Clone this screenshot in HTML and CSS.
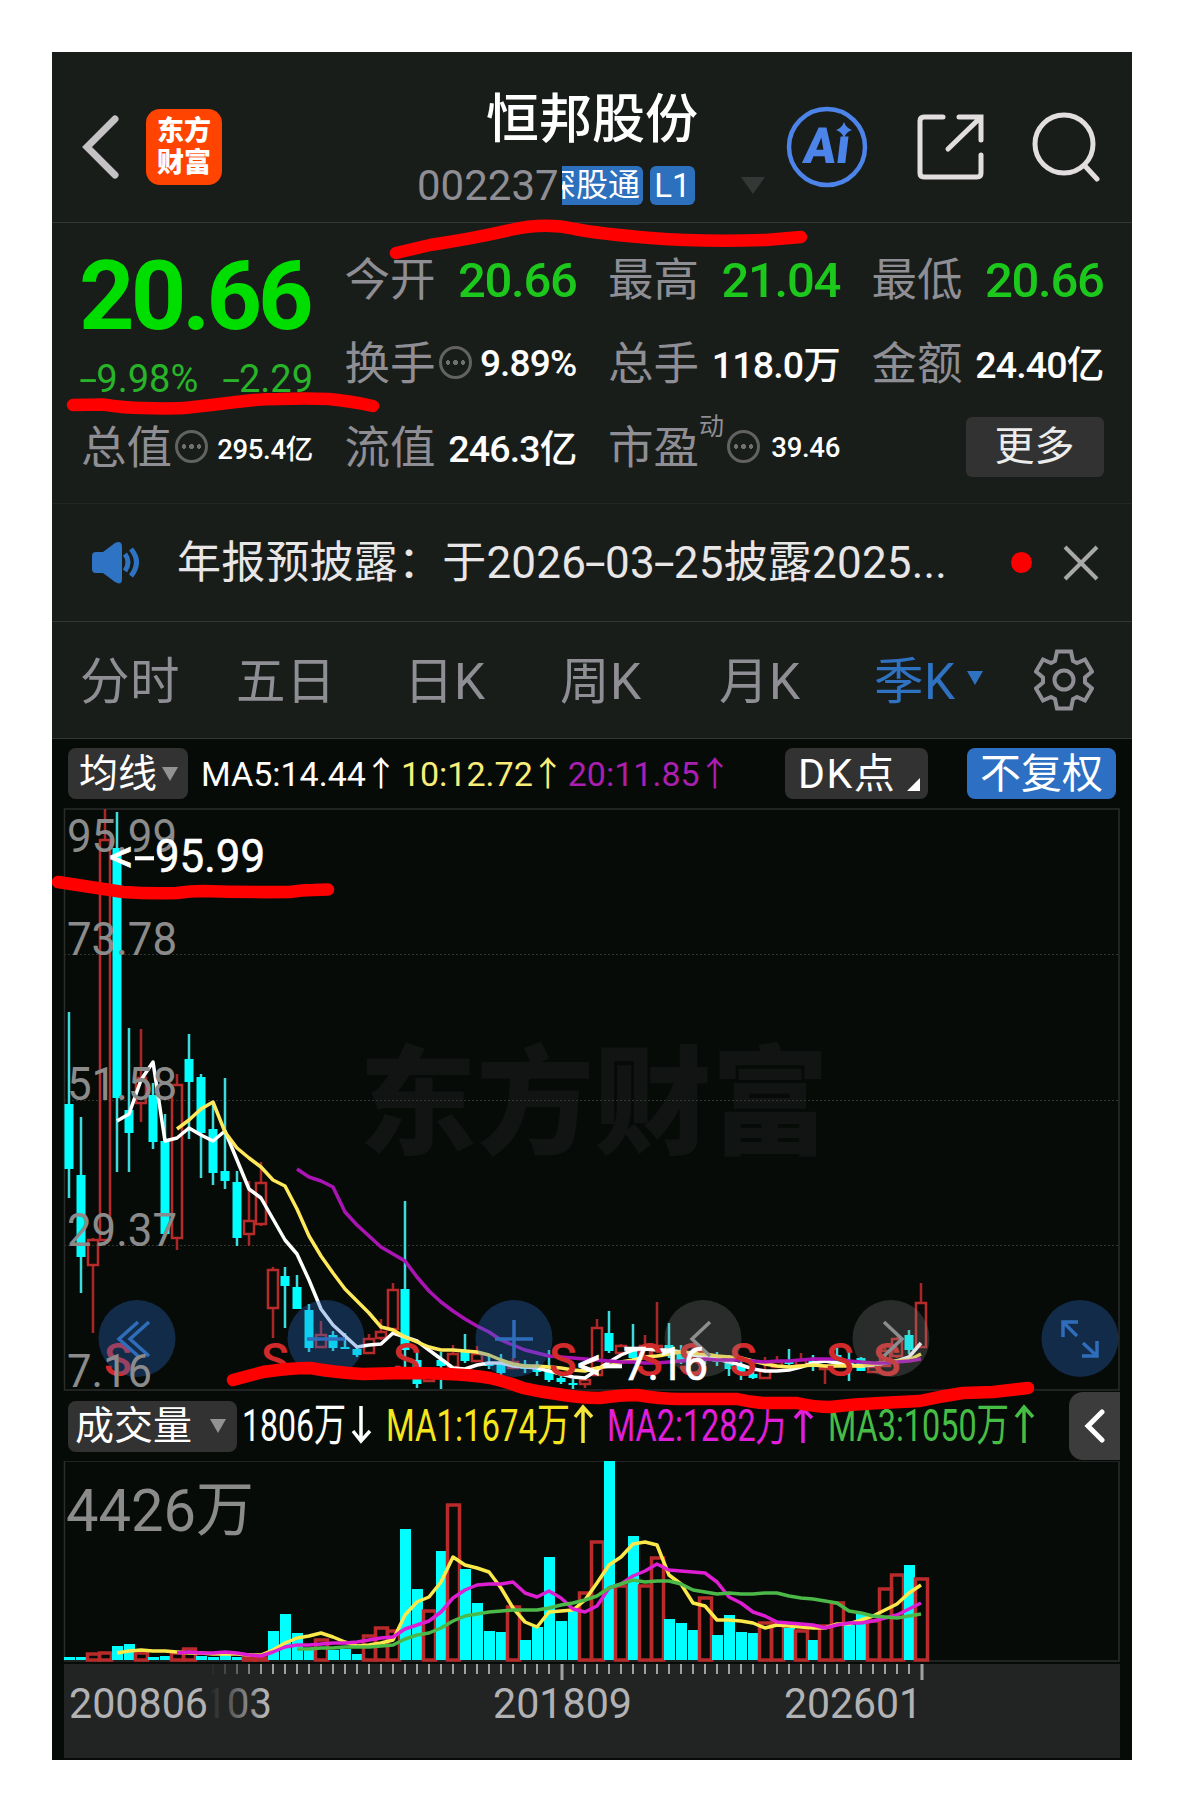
FILE: index.html
```html
<!DOCTYPE html>
<html lang="zh-CN">
<head>
    <meta charset="UTF-8">
    <meta name="viewport" content="width=device-width, initial-scale=1.0">
    <title>恒邦股份 002237</title>
    <link rel="stylesheet" href="styles.css">
</head>
<body>
    <div class="phone">
        <header class="header">
            <div class="header-left">
                <svg class="back" width="38" height="64" viewBox="0 0 38 64"><path d="M33 4 L5 32 L33 60"/></svg>
                <div class="logo"><span>东方</span><span>财富</span></div>
            </div>
            <div class="header-title">
                <h1>恒邦股份</h1>
                <div class="code-row">
                    <span class="code">002237</span>
                    <span class="badge badge-cut"><span>深股通</span></span>
                    <span class="badge badge-l1">L1</span>
                    <i class="tri tri-title"></i>
                </div>
            </div>
            <div class="header-right">
                <svg width="82" height="82" viewBox="0 0 82 82">
                    <circle cx="41" cy="41" r="38" fill="none" stroke="#4c84ea" stroke-width="4.5"/>
                    <text class="ai" transform="translate(16 57) skewX(-7)" textLength="46" lengthAdjust="spacingAndGlyphs">Aı</text>
                    <path d="M58 16 Q60 22 66 24 Q60 26 58 32 Q56 26 50 24 Q56 22 58 16Z" fill="#4c84ea"/>
                </svg>
                <svg class="line-icon" width="68" height="68" viewBox="0 0 68 68">
                    <path d="M27 4 H8 Q4 4 4 8 V60 Q4 64 8 64 H61 Q65 64 65 60 V42"/>
                    <path d="M32 36 L64 5 M43 4 H65 V27"/>
                </svg>
                <svg class="line-icon" width="70" height="70" viewBox="0 0 70 70">
                    <circle cx="32" cy="32" r="29"/>
                    <path d="M53 54 L65 67"/>
                </svg>
            </div>
        </header>

        <section class="quote">
            <div class="price-box">
                <div class="price">20.66</div>
                <div class="change"><span><i class="dash">-</i>9.98%</span><span><i class="dash">-</i>2.29</span></div>
            </div>
            <div class="item"><label>今开</label><b class="lg green">20.66</b></div>
            <div class="item"><label>最高</label><b class="lg green">21.04</b></div>
            <div class="item"><label>最低</label><b class="lg green">20.66</b></div>
            <div class="item"><label>换手</label><i class="dots"></i><b class="pct">9.89%</b></div>
            <div class="item"><label>总手</label><b>118.0万</b></div>
            <div class="item"><label>金额</label><b>24.40亿</b></div>
            <div class="item"><label>总值</label><i class="dots"></i><b class="sm">295.4亿</b></div>
            <div class="item"><label>流值</label><b>246.3亿</b></div>
            <div class="item"><label>市盈</label><sup>动</sup><i class="dots"></i><b class="sm">39.46</b></div>
            <div class="item item-more"><button class="more">更多</button></div>
        </section>

        <section class="notice">
            <svg width="52" height="44" viewBox="0 0 52 44">
                <path d="M2 15 Q2 11 6 11 H13 L25 2 Q32 -1 32 6 V38 Q32 45 25 41 L13 32 H6 Q2 32 2 28Z" fill="#2f74c4"/>
                <path d="M35 13 Q41 21 35 30 M41 8 Q52 21 41 35" fill="none" stroke="#2f74c4" stroke-width="5"/>
            </svg>
            <p>年报预披露：于2026<i class="dash">-</i>03<i class="dash">-</i>25披露2025...</p>
            <i class="red-dot"></i>
            <svg width="36" height="36" viewBox="0 0 36 36"><path d="M2 2 L34 34 M34 2 L2 34" stroke="#a8a8a8" stroke-width="4"/></svg>
        </section>

        <nav class="tabs">
            <span>分时</span>
            <span>五日</span>
            <span>日K</span>
            <span>周K</span>
            <span>月K</span>
            <span class="active">季K<i class="tri tri-tab"></i></span>
            <svg width="60" height="62" viewBox="-30 -31 60 62">
                <path d="M-7 -28.500 H7 L9 -19 L13 -17 L21 -20.500 L28 -8.500 L21 -2.500 V2.500 L28 8.500 L21 20.500 L13 17 L9 19 L7 28.500 H-7 L-9 19 L-13 17 L-21 20.500 L-28 8.500 L-21 2.500 V-2.500 L-28 -8.500 L-21 -20.500 L-13 -17 L-9 -19Z"/>
                <circle r="9.500"/>
            </svg>
        </nav>

        <section class="chart">
            <div class="ma-bar">
                <button class="chip chip-ma">均线<i class="tri"></i></button>
                <div class="ma-values">
                    <span>MA5:14.44<em>↑</em></span>
                    <span class="yellow">10:12.72<em>↑</em></span>
                    <span class="purple">20:11.85<em>↑</em></span>
                </div>
                <button class="chip chip-dk">DK点<i class="corner"></i></button>
                <button class="chip chip-blue">不复权</button>
            </div>
            <svg class="kline" id="kline" width="1080" height="583" viewBox="52 808 1080 583"></svg>
            <div class="vol-bar">
                <button class="chip chip-vol">成交量<i class="tri"></i></button>
                <svg class="vol-legend" width="800" height="70" viewBox="240 1391 800 70">
                    <g fill="#fff"><text x="242" y="1441" textLength="104" lengthAdjust="spacingAndGlyphs">1806万</text><path d="M361 1406 V1441 M353 1431 L361 1441 L370 1431" stroke="#fff"/></g>
                    <g fill="#f5e61e"><text x="386" y="1441" textLength="184" lengthAdjust="spacingAndGlyphs">MA1:1674万</text><path d="M583 1443 V1407 M575 1417 L583 1407 L592 1417" stroke="#f5e63c"/></g>
                    <g fill="#e01edc"><text x="607" y="1441" textLength="181" lengthAdjust="spacingAndGlyphs">MA2:1282万</text><path d="M803 1443 V1409 M795 1418 L803 1409 L812 1418" stroke="#e01edc"/></g>
                    <g fill="#46be46"><text x="828" y="1441" textLength="181" lengthAdjust="spacingAndGlyphs">MA3:1050万</text><path d="M1024 1443 V1407 M1016 1417 L1024 1407 L1033 1417" stroke="#46be46"/></g>
                </svg>
                <button class="collapse"><svg width="22" height="34" viewBox="0 0 22 34"><path d="M18 3 L4 17 L18 31"/></svg></button>
            </div>
            <svg class="volume" id="volume" width="1080" height="299" viewBox="52 1461 1080 299"></svg>
        </section>

        <!-- hand-drawn highlights -->
        <svg class="marks" width="1080" height="1708" viewBox="52 52 1080 1708">
            <path d="M396 253 L430 245 Q475 238 510 230 T575 229 Q601 234 651 238 T766 240 L801 237"/>
            <path d="M73 405 L103 404.500 Q125 408 143 408 Q172 409 189 407.500 Q212 405 236 402 Q258 399 279 399 Q305 398 329 399 Q350 401 373 406"/>
            <path d="M58 882 Q90 887 123 892 Q150 894 177 893 Q190 891 203 891 Q245 892.500 290 892 Q302 890 313 890 L328 889.500"/>
            <path d="M233 1380 L263 1372 Q290 1368 310 1368 Q340 1373 363 1374 L403 1373 Q430 1373 447 1374 Q472 1375 490 1378 Q507 1382 523 1388 Q540 1392 557 1394 Q580 1398 600 1398 Q620 1395 637 1395 Q660 1399 680 1399 L737 1399 Q750 1402 763 1403 L797 1403 Q815 1407 830 1407 Q855 1404 880 1403 L920 1401 Q942 1396 963 1393 L993 1392 L1028 1388"/>
        </svg>
    </div>
    <script src="chart.js"></script>
</body>
</html>
```

FILE: styles.css
```css
* {
    box-sizing: border-box;
}

body {
    margin: 0;
    padding: 52px;
    background: #fff;
    font-family: Roboto, "Noto Sans CJK SC", sans-serif;
    color: #fff;
}

button {
    border: none;
    padding: 0;
    font-family: inherit;
    color: #fff;
}

h1, p {
    margin: 0;
    font-weight: 400;
}

.phone {
    position: relative;
    width: 1080px;
    height: 1708px;
    background: #191d1a;
    overflow: hidden;
}

.tri {
    display: inline-block;
    border-left: 8px solid transparent;
    border-right: 8px solid transparent;
    border-top: 14px solid #929292;
}

.dash {
    display: inline-block;
    width: 0.430em;
    text-align: center;
    font-style: normal;
    transform: scaleX(1.700);
}

/* header */
.header {
    display: grid;
    grid-template-columns: 1fr 346px 1fr;
    height: 171px;
    border-bottom: 1px solid #343735;
}

.header-left {
    display: flex;
    align-items: center;
    gap: 26px;
    padding: 20px 0 0 30px;
}

.back path {
    fill: none;
    stroke: #c4c2c4;
    stroke-width: 7;
    stroke-linecap: round;
}

.logo {
    display: flex;
    flex-direction: column;
    align-items: center;
    justify-content: center;
    width: 76px;
    height: 76px;
    border-radius: 14px;
    background: #fe4400;
    font-size: 27px;
    font-weight: 900;
    line-height: 32px;
}

.header-title {
    display: flex;
    flex-direction: column;
    align-items: center;
    padding-top: 33px;
}

.header-title h1 {
    font-size: 53px;
    line-height: 70px;
    font-weight: 500;
}

.code-row {
    display: flex;
    align-items: center;
    width: 346px;
    height: 61px;
}

.code {
    width: 145px;
    margin-left: -2px;
    font-size: 42px;
    color: #8f8e94;
}

.badge {
    display: flex;
    align-items: center;
    justify-content: flex-end;
    height: 39px;
    background: #2c70be;
    border-radius: 6px;
    font-size: 33px;
    line-height: 39px;
}

.badge-cut {
    width: 81px;
    padding-right: 3px;
    border-radius: 0 6px 6px 0;
    overflow: hidden;
    white-space: nowrap;
    font-size: 32px;
}

.badge-l1 {
    width: 45px;
    margin-left: 7px;
    justify-content: center;
}

.tri-title {
    margin-left: auto;
    border-left-width: 12px;
    border-right-width: 12px;
    border-top: 17px solid #353736;
}

.header-right {
    display: flex;
    align-items: center;
    justify-content: flex-end;
    padding: 20px 30px 0 0;
    gap: 48px;
}

.ai {
    font-family: Roboto, sans-serif;
    font-size: 50px;
    font-weight: 900;
    fill: #4c84ea;
}

.line-icon {
    fill: none;
    stroke: #e2dee0;
    stroke-width: 5;
    stroke-linecap: round;
}

/* quote */
.quote {
    display: grid;
    grid-template-columns: repeat(4, 232px);
    grid-template-rows: repeat(3, 84px);
    column-gap: 31.500px;
    height: 281px;
    padding: 14px 28px 0 29px;
    border-bottom: 1px solid #242725;
}

.price-box {
    grid-row: span 2;
}

.price {
    margin: 14px 0 0 -2px;
    font-size: 97px;
    font-weight: 700;
    line-height: 90px;
    letter-spacing: -4px;
    color: #00de00;
}

.change {
    display: flex;
    justify-content: space-between;
    margin: 14px 0 0 -1px;
    font-size: 38px;
    line-height: 48px;
    color: #28b428;
}

.item {
    display: flex;
    align-items: center;
    white-space: nowrap;
}

.item label {
    padding-top: 4px;
    font-size: 45.500px;
    line-height: 60px;
    color: #8f8e94;
}

.item b {
    margin-left: auto;
    padding-bottom: 3px;
    font-size: 37.500px;
    font-weight: 500;
    letter-spacing: -0.800px;
}

.item .lg {
    font-size: 49px;
    letter-spacing: -1.300px;
    padding: 2px 0 0;
}

.item .pct {
    font-size: 37px;
    padding: 1px 0 0;
}

.item .sm {
    font-size: 27.500px;
    letter-spacing: -0.300px;
    padding: 0;
}

.green {
    color: #1dc81d;
}

.item sup {
    align-self: flex-start;
    font-size: 25px;
    line-height: 30px;
    margin-top: 7px;
    color: #8f8e94;
}

.dots {
    width: 33px;
    height: 33px;
    margin: 0 0 2px 3px;
    border: 3px solid #626262;
    border-radius: 50%;
    background:
        radial-gradient(circle 2.500px at 6px 13.500px, #707070 90%, transparent),
        radial-gradient(circle 2.500px at 13.500px 13.500px, #707070 90%, transparent),
        radial-gradient(circle 2.500px at 21px 13.500px, #707070 90%, transparent);
}

.item-more {
    justify-content: flex-end;
}

.more {
    width: 138px;
    height: 60px;
    border-radius: 6px;
    background: #323232;
    font-size: 40px;
    line-height: 58px;
    color: #ececec;
}

/* notice */
.notice {
    display: flex;
    align-items: center;
    height: 118px;
    padding: 0 33px 0 38px;
    border-bottom: 1px solid #343735;
}

.notice p {
    margin: 0 0 7px 35px;
    font-size: 44px;
    letter-spacing: 0.200px;
    color: #e8e6e6;
}

.red-dot {
    width: 21px;
    height: 21px;
    margin: 0 31px 0 auto;
    border-radius: 50%;
    background: #fb0000;
}

/* tabs */
.tabs {
    display: grid;
    grid-template-columns: 156px 168px 156px 159px 155px 160px 60px;
    align-items: center;
    height: 117px;
    padding-left: 28px;
    border-bottom: 1px solid #343735;
    font-size: 49.500px;
    color: #8f8e94;
}

.tabs span {
    padding-bottom: 5px;
    letter-spacing: 0.500px;
}

.tabs svg {
    fill: none;
    stroke: #8f8e94;
    stroke-width: 4;
}

.tabs .active {
    display: flex;
    align-items: center;
    color: #2f72c2;
}

.tri-tab {
    margin-left: 11px;
    border-top-color: #2f72c2;
}

/* chart area */
.chart {
    height: 1021px;
    background: #070b08;
}

.ma-bar, .vol-bar {
    display: flex;
    align-items: center;
    height: 69px;
    padding-left: 16px;
}

.chip {
    display: flex;
    align-items: center;
    height: 51px;
    border-radius: 8px;
    background: #323232;
    font-size: 39px;
    line-height: 50px;
}

.chip-ma {
    width: 120px;
    padding-left: 11px;
    gap: 5px;
}

.ma-values {
    display: flex;
    margin-left: 13px;
    padding-bottom: 5px;
    width: 538px;
    font-size: 34px;
    white-space: nowrap;
}

.ma-values em {
    display: inline-block;
    width: 35px;
    text-indent: -2px;
    font-style: normal;
}

.yellow {
    color: #f8ee78;
}

.purple {
    color: #aa1eb0;
}

.chip-dk {
    width: 143px;
    margin-left: 46px;
    padding: 0 8px 0 13px;
    justify-content: space-between;
    font-size: 41px;
    letter-spacing: 1.500px;
}

.corner {
    align-self: flex-end;
    margin-bottom: 8px;
    border-left: 13px solid transparent;
    border-bottom: 13px solid #fff;
}

.chip-blue {
    width: 149px;
    margin-left: 39px;
    justify-content: center;
    background: #2d6fc2;
    font-size: 41px;
}

.kline, .volume {
    display: block;
}

.grid-line {
    stroke: #333634;
    stroke-dasharray: 2 2;
}

.frame {
    fill: none;
    stroke: #2a2d2b;
    stroke-width: 1.500;
}

.watermark {
    font: 900 118px "Noto Sans CJK SC", sans-serif;
    fill: #111412;
}

.up {
    fill: none;
    stroke: #b92b2b;
    stroke-width: 2.500;
}

.volume .up {
    stroke-width: 3.500;
}

.down {
    fill: #00ffff;
}

.wick-up {
    stroke: #a82626;
    stroke-width: 2.500;
}

.wick-down {
    stroke: #3ddcdc;
    stroke-width: 2.500;
}

.line {
    fill: none;
    stroke-width: 3.500;
    stroke-linejoin: round;
}

.axis-label {
    font-size: 46px;
    fill: #8b8b8b;
}

.peak {
    font-size: 46px;
    fill: #fff;
    stroke: #fff;
    stroke-width: 0.600;
}

.sell {
    font-size: 46px;
    font-weight: 500;
    fill: #d22a2a;
    text-anchor: middle;
}

.round-blue {
    fill: rgba(44, 110, 205, 0.33);
}

.round-gray {
    fill: rgba(145, 145, 145, 0.25);
}

.icon-blue, .icon-gray {
    fill: none;
    stroke: #2f6dbb;
    stroke-width: 3.500;
}

.icon-gray {
    stroke: #8d8c8f;
}

.vol-bar {
    height: 70px;
}

.chip-vol {
    width: 169px;
    padding: 0 11px 0 7px;
    justify-content: space-between;
}

.vol-legend {
    margin-left: 3px;
    font-size: 45px;
}

.vol-legend path {
    fill: none;
    stroke-width: 3.500;
}

.collapse {
    display: flex;
    align-items: center;
    justify-content: center;
    width: 51px;
    height: 68px;
    margin-left: 29px;
    border-radius: 14px 0 0 14px;
    background: #3c3c3c;
}

.collapse path {
    fill: none;
    stroke: #fff;
    stroke-width: 5;
    stroke-linecap: round;
}

.vol-max {
    font-size: 60px;
    fill: #8b8b8b;
}

.date {
    font-size: 42px;
    fill: #b2b2b5;
}

.marks {
    position: absolute;
    left: 0;
    top: 0;
    fill: none;
    stroke: #fe0000;
    stroke-width: 12.500;
    stroke-linecap: round;
    stroke-linejoin: round;
}
```

FILE: chart.js
```js
// type, high, body top, body bottom, low
const candles = [
    ['d',1012,1104,1169,1198], ['d',1117,1175,1257,1293], ['u',1238,1240,1265,1333], ['u',809,840,1240,1240],
    ['d',812,848,1098,1172], ['d',1028,1110,1133,1172], ['u',1029,1078,1103,1122], ['d',1083,1095,1142,1149],
    ['d',1114,1141,1234,1234], ['u',1074,1085,1238,1250], ['d',1034,1059,1082,1139], ['d',1074,1077,1133,1178],
    ['d',1102,1129,1173,1185], ['d',1078,1171,1181,1189], ['d',1171,1182,1238,1246], ['u',1181,1221,1234,1246],
    ['u',1162,1183,1224,1226], ['u',1267,1270,1308,1338], ['d',1267,1276,1286,1328], ['d',1275,1287,1309,1309],
    ['d',1304,1310,1348,1352], ['u',1321,1335,1347,1347], ['d',1331,1335,1348,1351], ['d',1333,1347,1349,1349],
    ['d',1346,1349,1355,1357], ['u',1334,1339,1353,1353], ['u',1319,1332,1338,1340], ['u',1283,1290,1329,1330],
    ['d',1201,1289,1350,1368], ['d',1352,1360,1384,1388], ['u',1368,1370,1381,1381], ['d',1352,1360,1366,1389],
    ['u',1345,1354,1367,1367], ['d',1334,1352,1361,1363], ['u',1346,1354,1361,1361], ['d',1356,1362,1366,1369],
    ['d',1354,1363,1373,1378], ['u',1358,1362,1368,1368], ['d',1360,1364,1369,1373], ['d',1361,1365,1372,1376],
    ['d',1350,1370,1380,1382], ['d',1374,1378,1382,1384], ['d',1379,1383,1385,1389], ['u',1378,1380,1384,1388],
    ['u',1319,1328,1375,1376], ['d',1311,1333,1351,1353], ['u',1344,1346,1353,1353], ['d',1324,1350,1358,1362],
    ['u',1335,1346,1356,1358], ['u',1302,1346,1356,1356], ['d',1323,1345,1356,1358], ['d',1345,1352,1360,1364],
    ['u',1348,1352,1360,1360], ['d',1350,1354,1360,1364], ['d',1352,1356,1362,1366], ['d',1355,1363,1369,1376],
    ['d',1358,1366,1372,1380], ['d',1371,1374,1378,1379], ['u',1357,1371,1378,1378], ['u',1356,1362,1367,1367],
    ['d',1349,1360,1364,1366], ['u',1353,1360,1365,1367], ['d',1355,1361,1366,1371], ['u',1364,1367,1369,1384],
    ['d',1348,1355,1364,1366], ['d',1352,1362,1365,1381], ['d',1357,1358,1371,1371], ['u',1365,1367,1372,1372],
    ['u',1348,1351,1366,1366], ['u',1337,1339,1356,1358], ['d',1330,1335,1350,1354], ['u',1283,1303,1347,1348]
];

const ma5 = [1121,1114,1080,1062,1141,1138,1128,1135,1141,1131,1160,1189,1198,1219,1240,1254,1280,1309,1325,1336,1347,1345,1344,1333,1337,1341,1350,1359,1368,1369,1365,1363,1363,1366,1367,1368,1371,1374,1377,1378,1370,1362,1355,1350,1349,1350,1350,1352,1355,1357,1359,1362,1365,1369,1371,1371,1370,1367,1363,1361,1363,1365,1366,1365,1363,1361,1357,1343];
const ma10 = [1129,1120,1109,1102,1132,1148,1158,1167,1180,1186,1209,1236,1256,1273,1289,1301,1313,1327,1330,1337,1342,1347,1350,1350,1351,1352,1355,1360,1364,1366,1366,1367,1368,1370,1371,1368,1366,1362,1360,1357,1356,1354,1352,1353,1354,1356,1357,1358,1361,1364,1366,1367,1366,1365,1366,1366,1366,1366,1364,1362,1361,1360,1354];
const ma20 = [1169,1177,1181,1187,1212,1225,1236,1247,1254,1261,1277,1291,1302,1311,1319,1326,1332,1340,1345,1350,1353,1356,1357,1358,1359,1360,1361,1362,1362,1363,1363,1362,1361,1360,1359,1360,1360,1360,1361,1362,1361,1361,1360,1359,1359,1359,1361,1362,1363,1363,1362,1361,1359];

// volume bars: top of every bar, and which quarters closed up
const volTop = [1657,1657,1653,1652,1646,1644,1652,1657,1656,1652,1648,1656,1657,1653,1657,1657,1657,1631,1614,1633,1648,1639,1650,1649,1654,1635,1627,1630,1529,1589,1610,1551,1504,1569,1603,1631,1632,1606,1640,1627,1557,1621,1611,1592,1541,1461,1585,1536,1585,1557,1619,1623,1630,1597,1635,1615,1632,1633,1622,1622,1628,1630,1640,1625,1602,1625,1613,1620,1588,1574,1565,1578];
const volUp = [2,3,6,9,10,15,16,21,25,26,27,30,32,37,43,44,46,48,49,53,58,59,61,63,64,67,68,69,71];
const vma1 = [1653,1651,1650,1651,1651,1652,1653,1653,1654,1654,1654,1655,1655,1650,1643,1638,1636,1633,1637,1642,1646,1645,1643,1640,1615,1602,1597,1582,1557,1565,1568,1572,1588,1608,1622,1627,1612,1611,1610,1600,1583,1565,1557,1544,1542,1545,1575,1584,1603,1606,1620,1620,1621,1623,1628,1625,1626,1627,1628,1628,1624,1624,1620,1616,1610,1604,1593,1585];
const vma2 = [1653,1652,1653,1653,1652,1653,1655,1656,1652,1647,1645,1645,1644,1643,1643,1642,1640,1638,1637,1629,1625,1621,1612,1598,1590,1585,1584,1584,1582,1593,1597,1591,1598,1609,1612,1606,1588,1584,1576,1571,1564,1570,1571,1572,1573,1582,1597,1603,1612,1616,1622,1623,1624,1625,1628,1625,1623,1623,1621,1618,1615,1609,1603];
const vma3 = [1649,1649,1648,1648,1647,1647,1647,1646,1645,1639,1635,1633,1628,1621,1616,1614,1612,1611,1610,1610,1610,1608,1605,1603,1600,1596,1588,1584,1580,1582,1581,1581,1584,1590,1592,1594,1593,1594,1594,1593,1593,1596,1598,1599,1601,1603,1611,1613,1616,1617,1618,1616,1614];

const xAt = i => 69 + i * 12;

function line(values, start, color) {
    const pts = values.map((y, k) => `${xAt(start + k)},${y}`).join(' ');
    return `<polyline class="line" points="${pts}" stroke="${color}"/>`;
}

function label(cls, x, y, text, width) {
    return `<text class="${cls}" x="${x}" y="${y}" textLength="${width}" lengthAdjust="spacingAndGlyphs">${text}</text>`;
}

// "<-value" pointer at the highest / lowest price
function peak(x, y, text, width) {
    return label('peak', x, y, '&lt;', 25) + label('peak', x + 25, y, '-', 21) + label('peak', x + 46, y, text, width);
}

function drawKline() {
    let s = label('watermark', 359, 1145, '东方财富', 470);
    [954.5, 1100.5, 1245.5].forEach(y => {
        s += `<path class="grid-line" d="M64 ${y} H1119"/>`;
    });
    s += '<rect class="frame" x="64.500" y="809" width="1054.500" height="581"/>';

    candles.forEach(([type, high, top, bottom, low], i) => {
        const x = xAt(i);
        if (type === 'u') {
            s += `<path class="wick-up" d="M${x} ${high} V${top} M${x} ${bottom} V${low}"/>`;
            s += `<rect class="up" x="${x - 5}" y="${top}" width="10" height="${bottom - top}"/>`;
        } else {
            s += `<path class="wick-down" d="M${x} ${high} V${low}"/>`;
            s += `<rect class="down" x="${x - 4.5}" y="${top}" width="9" height="${bottom - top}"/>`;
        }
    });

    s += line(ma5, 4, '#ffffff') + line(ma10, 9, '#ffe95a') + line(ma20, 19, '#aa14b4');
    [118, 275, 407, 563, 649, 692, 743, 840, 887].forEach(x => {
        s += `<text class="sell" x="${x}" y="1376">S</text>`;
    });

    [137, 326, 514, 1080].forEach(x => {
        s += `<circle class="round-blue" cx="${x}" cy="1338.500" r="38.500"/>`;
    });
    [703, 891].forEach(x => {
        s += `<circle class="round-gray" cx="${x}" cy="1338.500" r="38.500"/>`;
    });
    s += '<path class="icon-blue" d="M138 1322 L119 1339 L138 1356 M149 1322 L130 1339 L149 1356"/>';
    s += '<path class="icon-blue" d="M307 1339 H345 M495 1339 H533 M514 1320 V1358"/>';
    s += '<path class="icon-gray" d="M710 1322 L692 1339 L710 1356 M884 1322 L902 1339 L884 1356"/>';
    s += '<path class="icon-blue" d="M1078 1322 H1063 V1337 M1063 1322 L1077 1336 M1097 1341 V1356 H1082 M1097 1356 L1083 1343"/>';

    s += label('axis-label', 67, 852, '95.99', 110);
    s += label('axis-label', 67, 955, '73.78', 110);
    s += label('axis-label', 67, 1100, '51.58', 110);
    s += label('axis-label', 67, 1246, '29.37', 110);
    s += label('axis-label', 67, 1387, '7.16', 85);
    s += peak(109, 872, '95.99', 110);
    s += peak(577, 1380, '7.16', 85);
    document.getElementById('kline').innerHTML = s;
}

function drawVolume() {
    let s = '<rect class="frame" x="64.500" y="1461" width="1054.500" height="200"/>';
    volTop.forEach((top, i) => {
        const x = xAt(i);
        if (volUp.includes(i)) {
            s += `<rect class="up" x="${x - 5.5}" y="${top + 1}" width="12" height="${1659 - top}"/>`;
        } else {
            s += `<rect class="down" x="${x - 5}" y="${top}" width="11" height="${1660 - top}"/>`;
        }
    });
    s += line(vma1, 4, '#fbe84a') + line(vma2, 9, '#de1ed2') + line(vma3, 19, '#4cb848');
    s += label('vol-max', 66, 1531, '4426万', 188);

    s += '<rect x="64" y="1664" width="1056" height="94" fill="#222423"/>';
    for (let i = 12; i < 72; i++) {
        const big = i === 41 || i === 71;
        s += `<rect x="${xAt(i) - (big ? 0.5 : 1)}" y="1664" width="${big ? 3 : 2}" height="${big ? 16 : 10}" fill="#a0a0a2"/>`;
    }
    s += label('date', 204, 1718, '103', 68);
    s += '<defs><linearGradient id="fade"><stop offset="0" stop-color="#222423"/><stop offset="0.100" stop-color="#222423"/><stop offset="1" stop-color="#222423" stop-opacity="0"/></linearGradient></defs>';
    s += '<rect x="204" y="1664" width="60" height="60" fill="url(#fade)"/>';
    s += label('date', 69, 1718, '200806', 139);
    s += label('date', 493, 1718, '201809', 139);
    s += label('date', 784, 1718, '202601', 138);
    document.getElementById('volume').innerHTML = s;
}

drawKline();
drawVolume();
```
